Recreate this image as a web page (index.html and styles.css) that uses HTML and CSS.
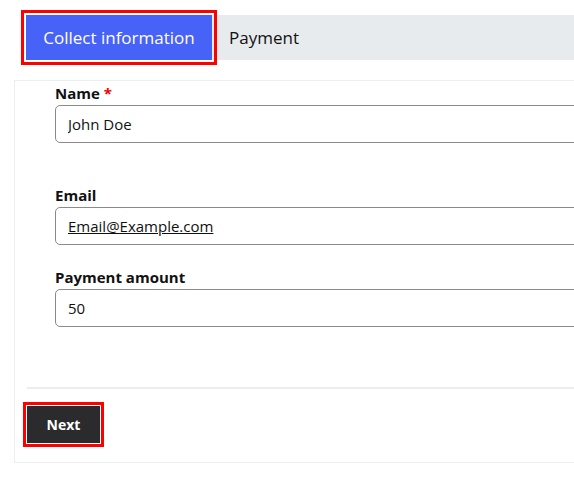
FILE: index.html
```html
<!DOCTYPE html>
<html lang="en">
<head>
  <meta charset="UTF-8">
  <title>Payment Wizard</title>
  <link rel="stylesheet" href="styles.css">
</head>
<body>

  <!-- Step tabs -->
  <div class="tabs">
    <div class="tab active">Collect information</div>
    <div class="tab">Payment</div>
  </div>

  <!-- Step 1 form -->
  <div class="card">
    <div class="fields">
      <div class="field has-hint">
        <label for="name">Name <span class="req">*</span></label>
        <input type="text" id="name" value="John Doe">
      </div>
      <div class="field">
        <label for="email">Email</label>
        <div class="input"><span class="link">Email@Example.com</span></div>
      </div>
      <div class="field">
        <label for="amount">Payment amount</label>
        <input type="text" id="amount" value="50">
      </div>
    </div>
    <div class="footer">
      <button class="next">Next</button>
    </div>
  </div>

</body>
</html>
```

FILE: styles.css
```css
* {
  box-sizing: border-box;
}

body {
  margin: 0;
  font-family: 'Open Sans', 'Noto Sans', sans-serif;
  color: #111;
  background: #fff;
  overflow: hidden;
}

.tabs {
  display: flex;
  margin: 15px 0 0 26px;
  height: 45px;
  background: #e8ebee;
}

.tab {
  display: flex;
  align-items: center;
  padding: 0 17px;
  font-size: 17px;
  color: #111;
}

.tab.active {
  width: 186px;
  justify-content: center;
  background: #4762f6;
  color: #fff;
  outline: 3px solid #f00;
  outline-offset: 2px;
}

.card {
  margin: 20px 0 0 14px;
  border: 1px solid #eeeeee;
  border-right: none;
  padding: 2px 0 0 0;
}

.fields {
  padding: 0 0 0 40px;
}

.field {
  margin-bottom: 22px;
}

.field.has-hint {
  margin-bottom: 42px;
}

label {
  display: block;
  font-weight: bold;
  font-size: 15px;
  line-height: 20px;
  margin-bottom: 2px;
}

.req {
  color: #e00;
}

input, .input {
  display: block;
  width: calc(100% + 10px);
  height: 38px;
  padding: 0 12px;
  border: 1px solid #8a8a8a;
  border-radius: 5px;
  font-family: inherit;
  font-size: 15px;
  color: #111;
  background: #fff;
}

.input {
  display: flex;
  align-items: center;
}

.link {
  text-decoration: underline;
}

.footer {
  margin: 60px 0 0 12px;
  border-top: 2px solid #ececec;
  padding: 17px 0 19px 0;
}

.next {
  display: block;
  width: 73px;
  height: 37px;
  border: none;
  border-radius: 0;
  background: #2b2b2d;
  color: #fff;
  font-family: inherit;
  font-weight: bold;
  font-size: 14px;
  outline: 3px solid #f00;
  outline-offset: 1px;
  cursor: pointer;
}
```
